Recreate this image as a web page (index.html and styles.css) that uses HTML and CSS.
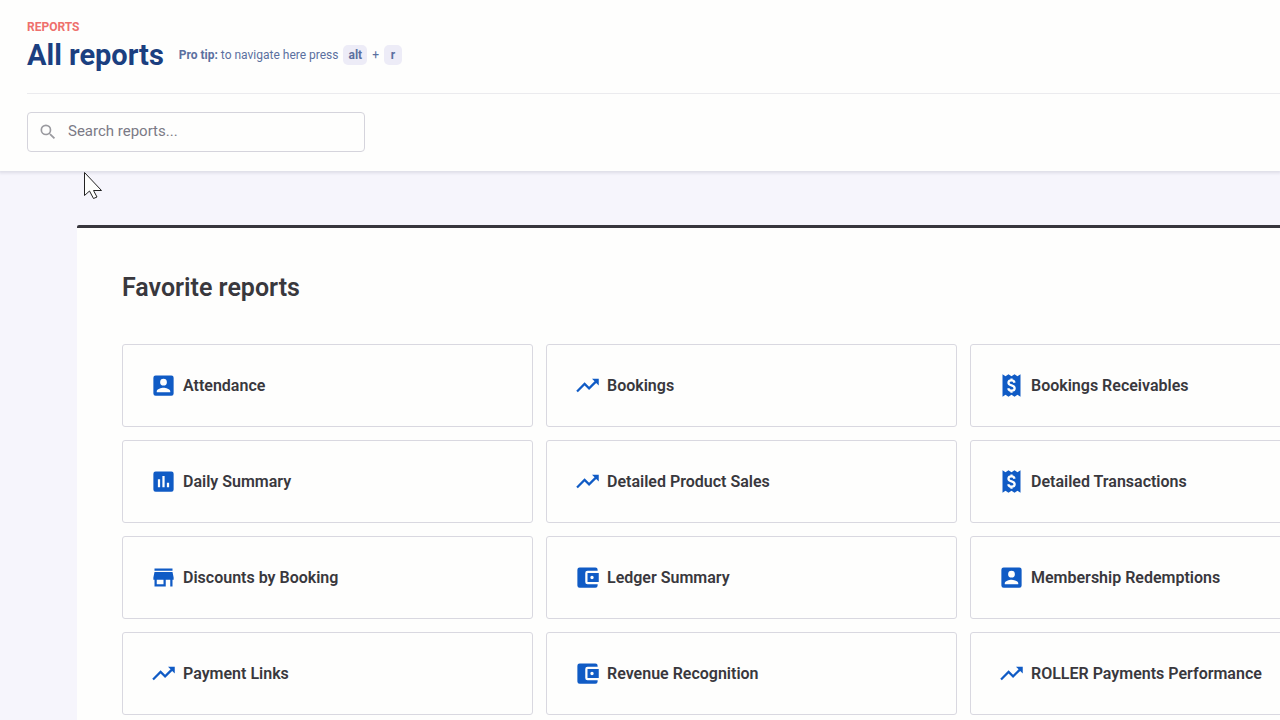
FILE: index.html
```html
<!DOCTYPE html>
<html lang="en">
<head>
    <meta charset="UTF-8">
    <meta name="viewport" content="width=device-width, initial-scale=1.0">
    <title>All reports</title>
    <link rel="stylesheet" href="styles.css">
</head>
<body>
    <!-- Shared icon shapes -->
    <svg class="sprite" aria-hidden="true">
        <symbol id="person" viewBox="0 0 24 24"><path fill-rule="evenodd" d="M5 3h14a2 2 0 0 1 2 2v14a2 2 0 0 1-2 2H5a2 2 0 0 1-2-2V5a2 2 0 0 1 2-2zm10 6a3 3 0 1 0-6 0 3 3 0 0 0 6 0zm-9 8v1h12v-1c0-2-4-3.100-6-3.100S6 15 6 17z"/></symbol>
        <symbol id="chart" viewBox="0 0 24 24"><path fill-rule="evenodd" d="M5 3h14a2 2 0 0 1 2 2v14a2 2 0 0 1-2 2H5a2 2 0 0 1-2-2V5a2 2 0 0 1 2-2zm2 7v7h2v-7H7zm4-3v10h2V7h-2zm4 6v4h2v-4h-2z"/></symbol>
        <symbol id="trend" viewBox="0 0 24 24"><path d="M16 6l2.290 2.290-4.880 4.880-4-4L2 16.590 3.410 18l6-6 4 4 6.300-6.290L22 12V6z"/></symbol>
        <symbol id="receipt" viewBox="0 0 24 24"><path d="M4 2l2.700 1.800L9.300 2 12 3.800 14.700 2l2.600 1.800L20 2v20l-2.700-1.800-2.600 1.800-2.700-1.800L9.300 22l-2.600-1.800L4 22z"/><path class="cutout" d="M14.700 9.500c-.3-1.300-1.300-2-2.700-2-1.600 0-2.700.8-2.700 2 0 3.100 5.500 1.800 5.500 4.900 0 1.400-1.200 2.200-2.800 2.200s-2.600-.8-2.900-2.200M12 5.700v1.800M12 16.600v1.800"/></symbol>
        <symbol id="store" viewBox="0 0 24 24"><path fill-rule="evenodd" d="M20 4H4v2h16V4zm1 10v-2l-1-5H4l-1 5v2h1v6h10v-6h4v6h2v-6h1zm-9 4H6v-4h6v4z"/></symbol>
        <symbol id="wallet" viewBox="0 0 24 24"><path fill-rule="evenodd" d="M21 18v1a2 2 0 0 1-2 2H5a2 2 0 0 1-2-2V5a2 2 0 0 1 2-2h14a2 2 0 0 1 2 2v1h-9a2 2 0 0 0-2 2v8a2 2 0 0 0 2 2h9zm-9-2h10V8H12v8zm4-2.500a1.500 1.500 0 1 1 0-3 1.500 1.500 0 0 1 0 3z"/></symbol>
    </svg>

    <header class="page-header">
        <div class="eyebrow">Reports</div>
        <div class="title-row">
            <h1>All reports</h1>
            <p class="tip"><b>Pro tip:</b> to navigate here press <kbd>alt</kbd> + <kbd>r</kbd></p>
        </div>
        <form class="search">
            <label for="search">
                <svg class="search-icon" viewBox="0 0 24 24" role="img" aria-label="Search"><path d="M15.500 14h-.79l-.28-.27A6.470 6.470 0 0 0 16 9.500 6.500 6.500 0 1 0 9.500 16c1.610 0 3.090-.59 4.230-1.570l.27.28v.79l5 4.990L20.490 19l-4.990-5zm-6 0a4.500 4.500 0 1 1 0-9 4.500 4.500 0 0 1 0 9z"/></svg>
            </label>
            <input type="search" id="search" name="search" placeholder="Search reports...">
        </form>
    </header>

    <main class="content">
        <section class="panel">
            <h2>Favorite reports</h2>
            <div class="reports">
                <a class="report" href="#"><svg class="icon"><use href="#person"/></svg>Attendance</a>
                <a class="report" href="#"><svg class="icon"><use href="#trend"/></svg>Bookings</a>
                <a class="report" href="#"><svg class="icon"><use href="#receipt"/></svg>Bookings Receivables</a>
                <a class="report" href="#"><svg class="icon"><use href="#chart"/></svg>Daily Summary</a>
                <a class="report" href="#"><svg class="icon"><use href="#trend"/></svg>Detailed Product Sales</a>
                <a class="report" href="#"><svg class="icon"><use href="#receipt"/></svg>Detailed Transactions</a>
                <a class="report" href="#"><svg class="icon"><use href="#store"/></svg>Discounts by Booking</a>
                <a class="report" href="#"><svg class="icon"><use href="#wallet"/></svg>Ledger Summary</a>
                <a class="report" href="#"><svg class="icon"><use href="#person"/></svg>Membership Redemptions</a>
                <a class="report" href="#"><svg class="icon"><use href="#trend"/></svg>Payment Links</a>
                <a class="report" href="#"><svg class="icon"><use href="#wallet"/></svg>Revenue Recognition</a>
                <a class="report" href="#"><svg class="icon"><use href="#trend"/></svg>ROLLER Payments Performance</a>
            </div>
        </section>
    </main>

    <svg class="cursor" viewBox="0 0 20 29" aria-hidden="true"><path d="M1.500 1.500v23l5-4.500 4 7.500 3.500-1.500-3.500-6.500h8z"/></svg>
</body>
</html>
```
FILE: styles.css
```css
* {
    box-sizing: border-box;
}
body {
    margin: 0;
    font-family: Roboto, Arial, sans-serif;
    color: #39383d;
    background-color: #f6f5fc;
    overflow-x: hidden;
}
.sprite {
    position: absolute;
    width: 0;
    height: 0;
}
.page-header {
    padding: 20px 0 19px 27px;
    background-color: #fefefd;
    box-shadow: 0 1px 3px 1px rgba(40, 40, 70, 0.12);
}
.eyebrow {
    font-size: 12px;
    line-height: 14px;
    font-weight: 700;
    text-transform: uppercase;
    color: #ee706c;
}
.title-row {
    display: flex;
    align-items: center;
    gap: 15px;
    padding-bottom: 17px;
    border-bottom: 1px solid #ebebee;
}
h1 {
    margin: 0;
    font-size: 29px;
    line-height: 42px;
    font-weight: 700;
    color: #1b3f80;
}
.tip {
    margin: 0;
    font-size: 12px;
    line-height: 20px;
    color: #5b70a0;
}
.tip b {
    font-weight: 700;
}
kbd {
    display: inline-block;
    min-width: 18px;
    margin: 0 2px;
    padding: 0 5px;
    border-radius: 5px;
    font-family: inherit;
    font-weight: 700;
    text-align: center;
    background-color: #edecf7;
}
.search {
    display: flex;
    align-items: center;
    width: 338px;
    height: 40px;
    margin-top: 18px;
    padding-left: 10px;
    border: 1px solid #d5d4dc;
    border-radius: 4px;
}
.search label {
    display: flex;
}
.search-icon {
    width: 20px;
    height: 20px;
    fill: #9a9a9f;
}
.search input {
    flex: 1;
    min-width: 0;
    padding: 0 10px 2px;
    border: none;
    outline: none;
    font-family: inherit;
    font-size: 15px;
    color: #39383d;
    background: none;
}
.search input::placeholder {
    color: #7b7a86;
}
.content {
    padding: 54px 0 54px 77px;
}
.panel {
    width: max-content;
    min-width: 100%;
    padding: 44px 45px;
    border-top: 3px solid #37363d;
    border-radius: 2px;
    background-color: #fefefd;
}
h2 {
    margin: 0 0 40px;
    font-size: 25px;
    line-height: 32px;
    font-weight: 600;
}
.reports {
    display: grid;
    grid-template-columns: repeat(3, minmax(411px, 1fr));
    gap: 13px;
}
.report {
    display: flex;
    align-items: center;
    gap: 6px;
    min-height: 83px;
    padding: 0 27px;
    border: 1px solid #d9d8e0;
    border-radius: 3px;
    font-size: 16px;
    font-weight: 600;
    color: inherit;
    text-decoration: none;
}
.report:hover {
    border-color: #105bc5;
}
.icon {
    width: 27px;
    height: 27px;
    fill: #105bc5;
}
.cutout {
    fill: none;
    stroke: #fefefd;
    stroke-width: 2;
}
.cursor {
    position: absolute;
    top: 171px;
    left: 83px;
    width: 20px;
    height: 29px;
    fill: #fefefd;
    stroke: #222;
}
```
